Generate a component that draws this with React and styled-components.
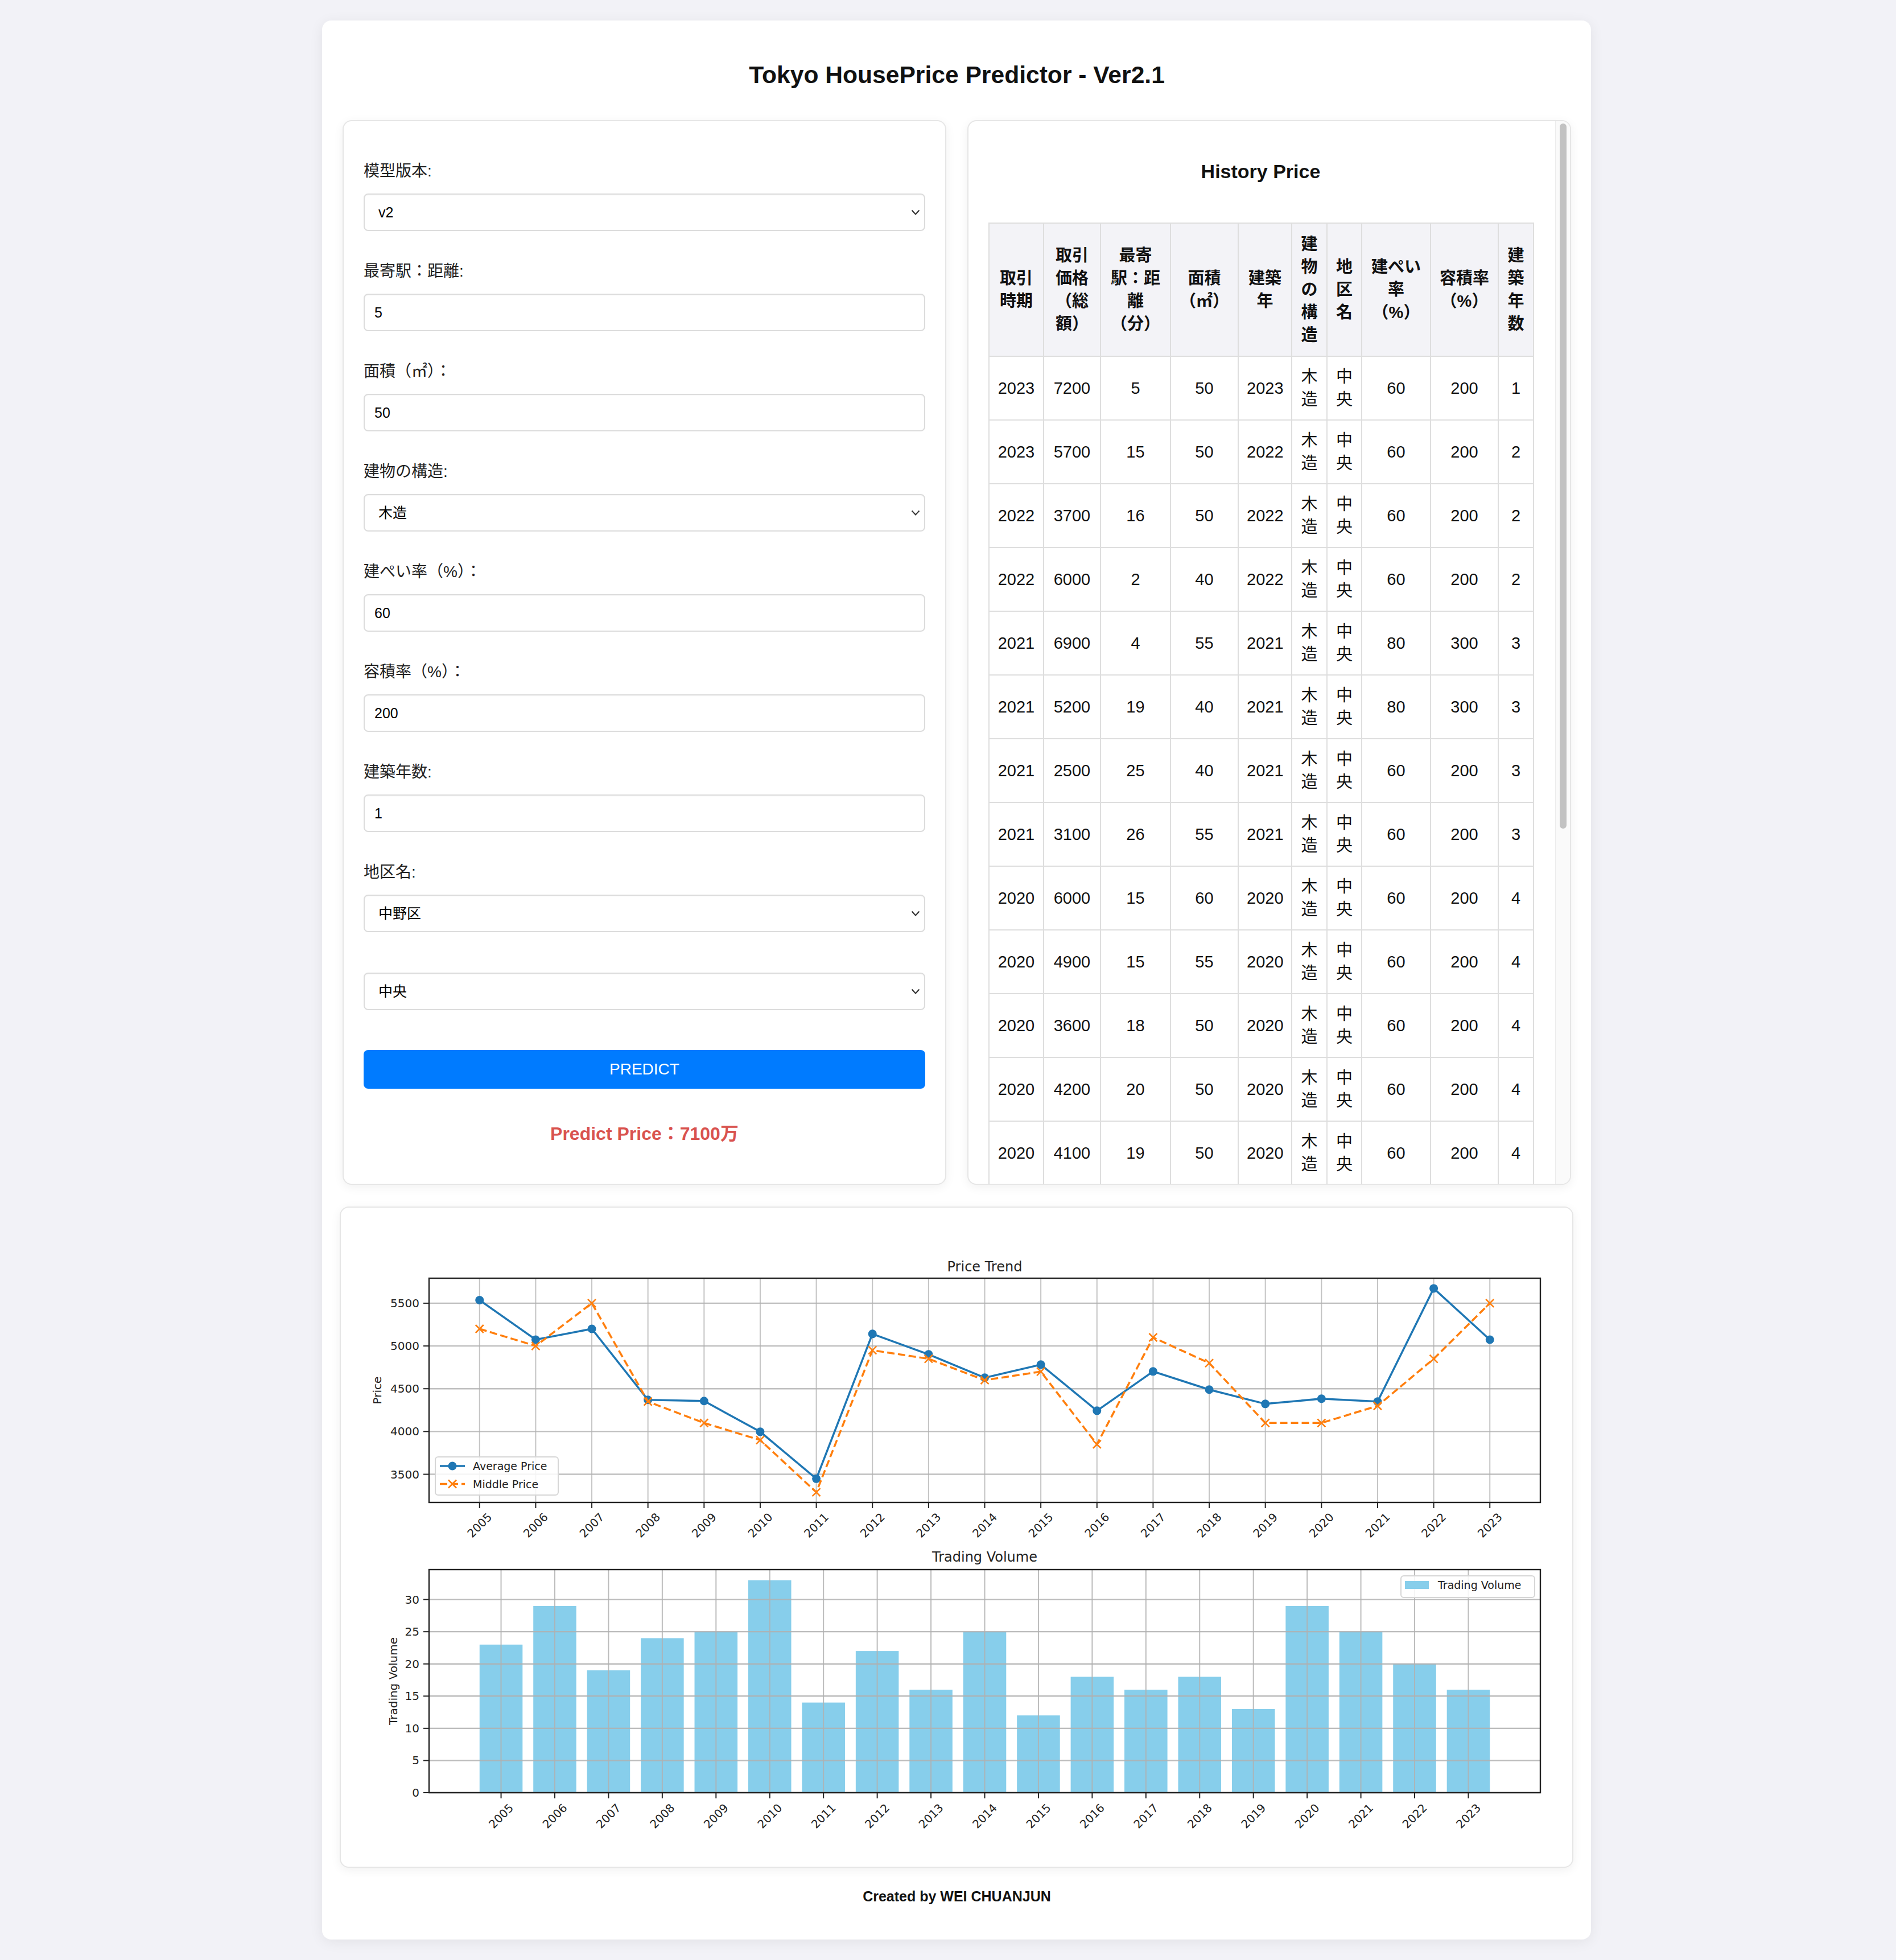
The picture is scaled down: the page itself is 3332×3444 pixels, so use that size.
import React from 'react';
import styled, { createGlobalStyle } from 'styled-components';

const GlobalStyle = createGlobalStyle`
  html, body {
    margin: 0;
  }
  body {
    background: #f2f2f7;
    padding: 36px 0 36px 30px;
    font-family: "Liberation Sans", "Noto Sans CJK JP", sans-serif;
    color: #222;
  }
  * {
    box-sizing: border-box;
  }
`;

const Container = styled.div`
  display: flow-root;
  width: 2230px;
  margin: 0 auto;
  padding: 0 35px 61px 36px;
  background: #ffffff;
  border-radius: 16px;
  box-shadow: 0 4px 24px rgba(0, 0, 0, 0.07);
`;

const Title = styled.h1`
  margin: 71px 0 56px;
  font-size: 42.6px;
  line-height: 48px;
  font-weight: bold;
  text-align: center;
  color: #111;
`;

const TopRow = styled.div`
  display: grid;
  grid-template-columns: 1fr 1fr;
  column-gap: 37px;
  align-items: stretch;
`;

const Card = styled.div`
  background: #fff;
  border: 2px solid #e6e6e6;
  border-radius: 16px;
  box-shadow: 0 4px 18px rgba(0, 0, 0, 0.06);
`;

const FormCard = styled(Card)`
  padding: 68px 35px 36px;
`;

const HistoryCard = styled(Card)`
  position: relative;
  height: 1871px;
  overflow: hidden;
  padding-right: 26px;
`;

const HistoryScroll = styled.div`
  height: 100%;
  overflow-y: auto;
  padding: 68px 39px 36px 35px;
  scrollbar-width: none;

  &::-webkit-scrollbar {
    display: none;
  }
`;

const ScrollTrack = styled.div`
  position: absolute;
  top: 0;
  right: 0;
  bottom: 0;
  width: 26px;
  background: #fafafa;
  border-left: 1px solid #ececec;
`;

const ScrollThumb = styled.div`
  position: absolute;
  top: 4px;
  left: 7px;
  width: 12px;
  height: 1239px;
  border-radius: 6px;
  background: #c2c2c2;
`;

const Field = styled.div`
  margin-bottom: 51px;
  padding-top: ${(p) => (p.$bare ? '20px' : '0')};
`;

const Label = styled.label`
  display: block;
  font-size: 28px;
  line-height: 40px;
  margin-bottom: 19px;
  color: #222;
`;

const Input = styled.input`
  display: block;
  width: 100%;
  height: 66px;
  padding: 0 17px;
  font-family: inherit;
  font-size: 25px;
  color: #000;
  background: #fff;
  border: 2px solid #dcdcdc;
  border-radius: 8px;
  box-shadow: inset 0 1px 2px rgba(0, 0, 0, 0.04);
  outline: none;
`;

const SelectWrap = styled.div`
  position: relative;
`;

const Select = styled.select`
  display: block;
  width: 100%;
  height: 66px;
  padding: 0 40px 0 24px;
  font-family: inherit;
  font-size: 25px;
  color: #000;
  background: #fff;
  border: 2px solid #dcdcdc;
  border-radius: 8px;
  box-shadow: inset 0 1px 2px rgba(0, 0, 0, 0.04);
  appearance: none;
  -webkit-appearance: none;
  outline: none;
`;

const Chevron = styled.svg`
  position: absolute;
  right: 9px;
  top: 28px;
  width: 16px;
  height: 10px;
  pointer-events: none;
`;

const PredictButton = styled.button`
  display: block;
  width: 100%;
  height: 68px;
  margin-top: 70px;
  border: none;
  border-radius: 8px;
  background: #007bff;
  color: #fff;
  font-family: inherit;
  font-size: 28px;
  cursor: pointer;
`;

const Result = styled.p`
  margin: 59px 0 0;
  font-size: 32px;
  line-height: 40px;
  font-weight: bold;
  text-align: center;
  color: #d9534f;
`;

const SectionTitle = styled.h3`
  margin: 0 0 70px;
  font-size: 34px;
  line-height: 40px;
  font-weight: bold;
  text-align: center;
  color: #111;
`;

const Table = styled.table`
  width: 957px;
  border-collapse: collapse;
  table-layout: fixed;
  font-size: 29px;
  line-height: 40px;

  th,
  td {
    border: 2px solid #dedede;
    padding: 15px 14px;
    text-align: center;
    vertical-align: middle;
  }

  th {
    padding: 16px 14px;
    background: #f3f3f7;
    font-weight: bold;
    color: #111;
  }

  td {
    color: #111;
  }
`;

const ChartCard = styled(Card)`
  margin: 38px -4px 0 -5px;
  overflow: hidden;

  svg {
    display: block;
  }
`;

const Footer = styled.p`
  margin: 35px 0 0;
  font-size: 25px;
  line-height: 30px;
  font-weight: bold;
  text-align: center;
  color: #111;
`;

const ChartText = styled.text`
  font-family: "DejaVu Sans", sans-serif;
  fill: #222;
  font-size: ${(p) => p.$size || 20}px;
`;

const SelectField = ({ value, options }) => (
  <SelectWrap>
    <Select defaultValue={value}>
      {options.map((o) => (
        <option key={o}>{o}</option>
      ))}
    </Select>
    <Chevron viewBox="0 0 16 10">
      <path d="M1.5 1.5 L8 8.5 L14.5 1.5" fill="none" stroke="#333" strokeWidth="2" />
    </Chevron>
  </SelectWrap>
);

const headers = [
  '取引時期',
  '取引価格（総額）',
  '最寄駅：距離（分）',
  '面積（㎡）',
  '建築年',
  '建物の構造',
  '地区名',
  '建ぺい率（%）',
  '容積率（%）',
  '建築年数',
];

const colWidths = [96, 100, 123, 119, 94, 62, 61, 121, 119, 62];

const rows = [
  [2023, 7200, 5, 50, 2023, 60, 200, 1],
  [2023, 5700, 15, 50, 2022, 60, 200, 2],
  [2022, 3700, 16, 50, 2022, 60, 200, 2],
  [2022, 6000, 2, 40, 2022, 60, 200, 2],
  [2021, 6900, 4, 55, 2021, 80, 300, 3],
  [2021, 5200, 19, 40, 2021, 80, 300, 3],
  [2021, 2500, 25, 40, 2021, 60, 200, 3],
  [2021, 3100, 26, 55, 2021, 60, 200, 3],
  [2020, 6000, 15, 60, 2020, 60, 200, 4],
  [2020, 4900, 15, 55, 2020, 60, 200, 4],
  [2020, 3600, 18, 50, 2020, 60, 200, 4],
  [2020, 4200, 20, 50, 2020, 60, 200, 4],
  [2020, 4100, 19, 50, 2020, 60, 200, 4],
  [2020, 3800, 12, 45, 2020, 60, 200, 4],
  [2019, 4400, 8, 50, 2019, 60, 200, 5],
  [2019, 3900, 14, 45, 2019, 60, 200, 5],
  [2019, 5100, 6, 55, 2019, 80, 300, 5],
  [2019, 3300, 22, 40, 2019, 60, 200, 5],
  [2018, 4700, 10, 50, 2018, 60, 200, 6],
  [2018, 3500, 17, 45, 2018, 60, 200, 6],
  [2018, 4000, 13, 50, 2018, 60, 200, 6],
];

const years = Array.from({ length: 19 }, (_, i) => 2005 + i);
const avgPrice = [5536, 5074, 5200, 4370, 4357, 3997, 3448, 5141, 4902, 4629, 4782, 4243, 4702, 4490, 4323, 4383, 4350, 5673, 5074];
const midPrice = [5200, 5000, 5500, 4350, 4100, 3900, 3290, 4950, 4850, 4600, 4700, 3850, 5100, 4800, 4100, 4100, 4300, 4850, 5500];
const volume = [23, 29, 19, 24, 25, 33, 14, 22, 16, 25, 12, 18, 16, 18, 13, 29, 25, 20, 16];

const X0 = 155;
const X1 = 2108;
const AW = X1 - X0;
const P0 = 124;
const P1 = 518;
const B0 = 636;
const B1 = 1028;
const GRID = '#b0b0b0';

const lo = Math.min(...avgPrice, ...midPrice);
const hi = Math.max(...avgPrice, ...midPrice);
const yMin = lo - (hi - lo) * 0.05;
const yMax = hi + (hi - lo) * 0.05;
const px = (yr) => X0 + ((yr - 2004.1) / 19.8) * AW;
const py = (v) => P0 + ((yMax - v) / (yMax - yMin)) * (P1 - P0);
const bx = (yr) => X0 + ((yr - 2003.66) / 20.68) * AW;
const by = (v) => B1 - (v / 34.65) * (B1 - B0);
const barW = (0.8 / 20.68) * AW;

const XMark = ({ x, y, s = 7 }) => (
  <g stroke="#ff7f0e" strokeWidth="2.6">
    <line x1={x - s} y1={y - s} x2={x + s} y2={y + s} />
    <line x1={x - s} y1={y + s} x2={x + s} y2={y - s} />
  </g>
);

const Charts = () => {
  const avgPts = years.map((y, i) => `${px(y)},${py(avgPrice[i])}`).join(' ');
  const midPts = years.map((y, i) => `${px(y)},${py(midPrice[i])}`).join(' ');
  const priceTicks = [3500, 4000, 4500, 5000, 5500];
  const volTicks = [0, 5, 10, 15, 20, 25, 30];

  return (
    <svg width="2164" height="1158" viewBox="0 0 2164 1158">
      {/* Price trend */}
      <ChartText x={(X0 + X1) / 2} y={112} $size={24} textAnchor="middle">
        Price Trend
      </ChartText>
      {years.map((y) => (
        <line key={`pg${y}`} x1={px(y)} x2={px(y)} y1={P0} y2={P1} stroke={GRID} strokeWidth="2" strokeOpacity="0.75" />
      ))}
      {priceTicks.map((t) => (
        <g key={`pt${t}`}>
          <line x1={X0} x2={X1} y1={py(t)} y2={py(t)} stroke={GRID} strokeWidth="2.4" strokeOpacity="0.8" />
          <line x1={X0 - 10} x2={X0} y1={py(t)} y2={py(t)} stroke="#222" strokeWidth="2" />
          <ChartText x={138} y={py(t) + 7} textAnchor="end">
            {t}
          </ChartText>
        </g>
      ))}
      <polyline points={avgPts} fill="none" stroke="#1f77b4" strokeWidth="3.5" />
      {years.map((y, i) => (
        <circle key={`ac${y}`} cx={px(y)} cy={py(avgPrice[i])} r="7.5" fill="#1f77b4" />
      ))}
      <polyline points={midPts} fill="none" stroke="#ff7f0e" strokeWidth="3.5" strokeDasharray="13 6" />
      {years.map((y, i) => (
        <XMark key={`mx${y}`} x={px(y)} y={py(midPrice[i])} />
      ))}
      <rect x={X0} y={P0} width={AW} height={P1 - P0} fill="none" stroke="#222" strokeWidth="2.4" />
      {years.map((y) => (
        <g key={`px${y}`}>
          <line x1={px(y)} x2={px(y)} y1={P1} y2={P1 + 10} stroke="#222" strokeWidth="2" />
          <ChartText
            x={px(y)}
            y={P1 + 40}
            textAnchor="middle"
            dominantBaseline="central"
            transform={`rotate(-45 ${px(y)} ${P1 + 40})`}
          >
            {y}
          </ChartText>
        </g>
      ))}
      <ChartText x={64} y={(P0 + P1) / 2} textAnchor="middle" dominantBaseline="central" transform={`rotate(-90 64 ${(P0 + P1) / 2})`}>
        Price
      </ChartText>
      <rect x="166" y="438" width="216" height="67" rx="5" fill="#fff" fillOpacity="0.85" stroke="#d6d6d6" strokeWidth="2" />
      <line x1="174" x2="218" y1="454" y2="454" stroke="#1f77b4" strokeWidth="3.5" />
      <circle cx="196" cy="454" r="7.5" fill="#1f77b4" />
      <ChartText x="232" y="461" $size={19}>
        Average Price
      </ChartText>
      <line x1="174" x2="218" y1="485.5" y2="485.5" stroke="#ff7f0e" strokeWidth="3.5" strokeDasharray="13 6" />
      <XMark x={196} y={485.5} />
      <ChartText x="232" y="492.5" $size={19}>
        Middle Price
      </ChartText>

      {/* Trading volume */}
      <ChartText x={(X0 + X1) / 2} y={622} $size={24} textAnchor="middle">
        Trading Volume
      </ChartText>
      {years.map((y, i) => (
        <rect
          key={`b${y}`}
          x={bx(y) - barW / 2}
          y={by(volume[i])}
          width={barW}
          height={B1 - by(volume[i])}
          fill="#87ceeb"
        />
      ))}
      {years.map((y) => (
        <line key={`bg${y}`} x1={bx(y)} x2={bx(y)} y1={B0} y2={B1} stroke={GRID} strokeWidth="2" strokeOpacity="0.85" />
      ))}
      {volTicks.map((t) => (
        <g key={`vt${t}`}>
          <line x1={X0} x2={X1} y1={by(t)} y2={by(t)} stroke={GRID} strokeWidth="2.4" strokeOpacity="0.85" />
          <line x1={X0 - 10} x2={X0} y1={by(t)} y2={by(t)} stroke="#222" strokeWidth="2" />
          <ChartText x={138} y={by(t) + 7} textAnchor="end">
            {t}
          </ChartText>
        </g>
      ))}
      <rect x={X0} y={B0} width={AW} height={B1 - B0} fill="none" stroke="#222" strokeWidth="2.4" />
      {years.map((y) => (
        <g key={`bxl${y}`}>
          <line x1={bx(y)} x2={bx(y)} y1={B1} y2={B1 + 10} stroke="#222" strokeWidth="2" />
          <ChartText
            x={bx(y)}
            y={B1 + 41}
            textAnchor="middle"
            dominantBaseline="central"
            transform={`rotate(-45 ${bx(y)} ${B1 + 41})`}
          >
            {y}
          </ChartText>
        </g>
      ))}
      <ChartText x={92} y={(B0 + B1) / 2} textAnchor="middle" dominantBaseline="central" transform={`rotate(-90 92 ${(B0 + B1) / 2})`}>
        Trading Volume
      </ChartText>
      <rect x="1863" y="647" width="235" height="38" rx="5" fill="#fff" fillOpacity="0.85" stroke="#d6d6d6" strokeWidth="2" />
      <rect x="1870" y="656" width="42" height="14" fill="#87ceeb" />
      <ChartText x="1928" y="670" $size={19}>
        Trading Volume
      </ChartText>
    </svg>
  );
};

const App = () => {
  return (
    <>
      <GlobalStyle />
      <Container>
        <Title>Tokyo HousePrice Predictor - Ver2.1</Title>
        <TopRow>
          <FormCard>
            <Field>
              <Label>模型版本:</Label>
              <SelectField value="v2" options={['v1', 'v2']} />
            </Field>
            <Field>
              <Label>最寄駅：距離:</Label>
              <Input type="number" defaultValue="5" />
            </Field>
            <Field>
              <Label>面積（㎡）：</Label>
              <Input type="number" defaultValue="50" />
            </Field>
            <Field>
              <Label>建物の構造:</Label>
              <SelectField value="木造" options={['木造', 'RC', 'SRC', '鉄骨造']} />
            </Field>
            <Field>
              <Label>建ぺい率（%）：</Label>
              <Input type="number" defaultValue="60" />
            </Field>
            <Field>
              <Label>容積率（%）：</Label>
              <Input type="number" defaultValue="200" />
            </Field>
            <Field>
              <Label>建築年数:</Label>
              <Input type="number" defaultValue="1" />
            </Field>
            <Field>
              <Label>地区名:</Label>
              <SelectField value="中野区" options={['中野区', '新宿区', '渋谷区']} />
            </Field>
            <Field $bare>
              <SelectField value="中央" options={['中央', '本町', '東中野']} />
            </Field>
            <PredictButton>PREDICT</PredictButton>
            <Result>Predict Price：7100万</Result>
          </FormCard>

          <HistoryCard>
            <HistoryScroll>
              <SectionTitle>History Price</SectionTitle>
              <Table>
                <colgroup>
                  {colWidths.map((w, i) => (
                    <col key={i} style={{ width: w }} />
                  ))}
                </colgroup>
                <thead>
                  <tr>
                    {headers.map((h) => (
                      <th key={h}>{h}</th>
                    ))}
                  </tr>
                </thead>
                <tbody>
                  {rows.map((r, i) => (
                    <tr key={i}>
                      <td>{r[0]}</td>
                      <td>{r[1]}</td>
                      <td>{r[2]}</td>
                      <td>{r[3]}</td>
                      <td>{r[4]}</td>
                      <td>木造</td>
                      <td>中央</td>
                      <td>{r[5]}</td>
                      <td>{r[6]}</td>
                      <td>{r[7]}</td>
                    </tr>
                  ))}
                </tbody>
              </Table>
            </HistoryScroll>
            <ScrollTrack>
              <ScrollThumb />
            </ScrollTrack>
          </HistoryCard>
        </TopRow>

        <ChartCard>
          <Charts />
        </ChartCard>

        <Footer>Created by WEI CHUANJUN</Footer>
      </Container>
    </>
  );
};

export default App;
